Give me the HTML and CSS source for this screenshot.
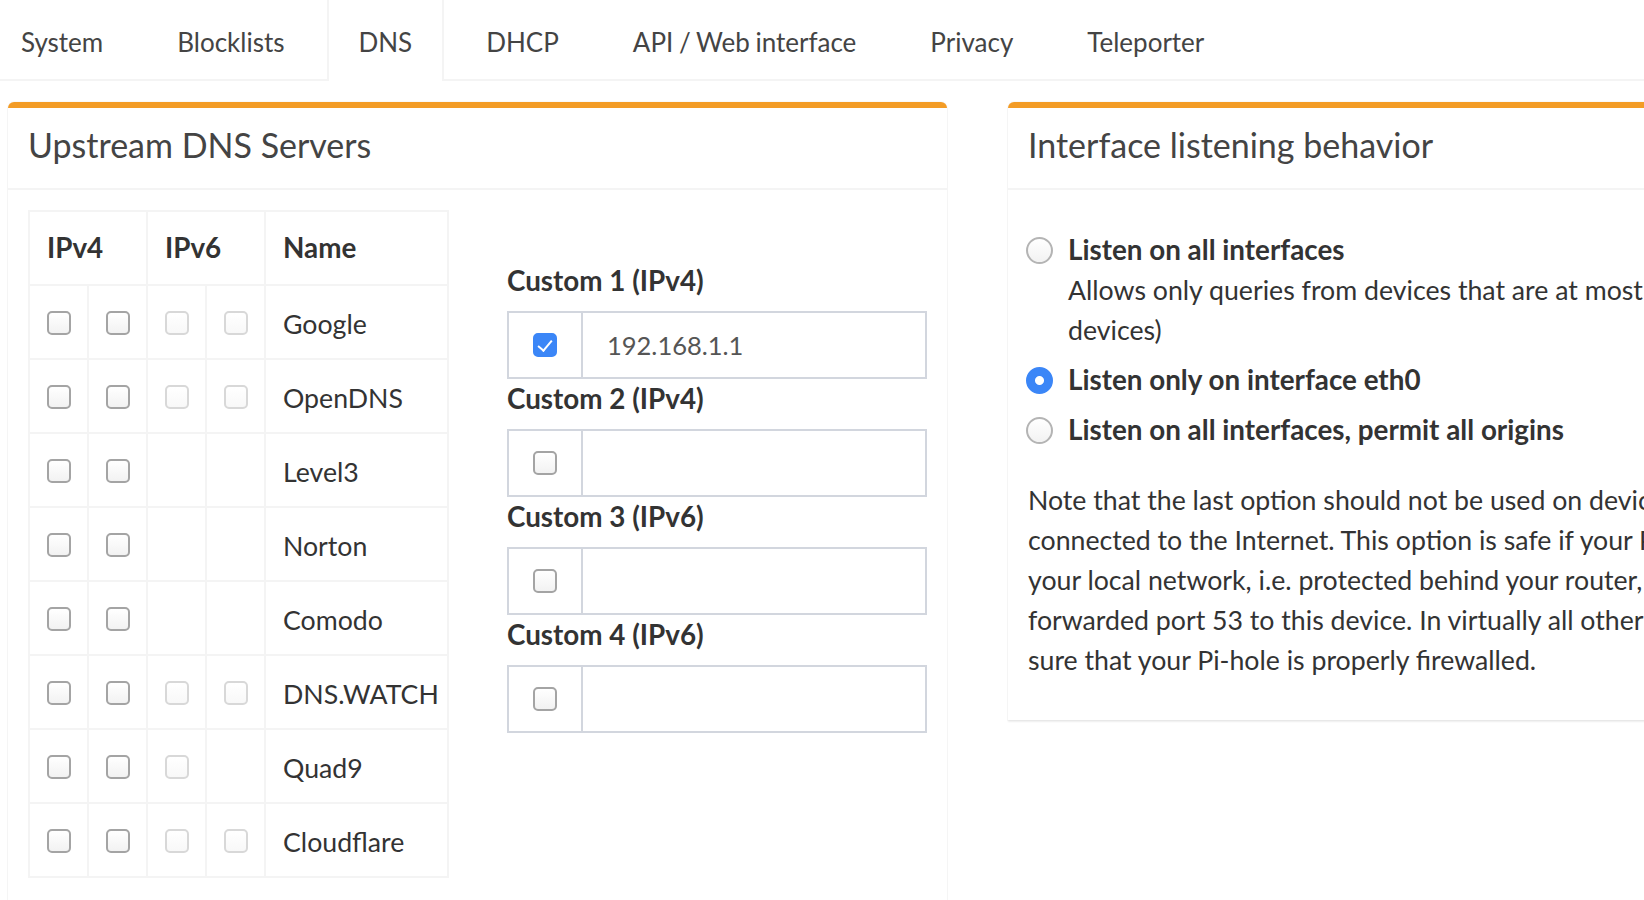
FILE: index.html
```html
<!DOCTYPE html>
<html>
<head>
  <meta name="viewport" content="width=device-width, initial-scale=1.0">
  <title>Settings - DNS</title>
  <link rel="stylesheet" href="styles.css">
</head>
<body>
  <ul class="nav-tabs">
    <li><a href="#system">System</a></li>
    <li><a href="#blocklists">Blocklists</a></li>
    <li class="active"><a href="#dns">DNS</a></li>
    <li><a href="#dhcp">DHCP</a></li>
    <li><a href="#api">API / Web interface</a></li>
    <li><a href="#privacy">Privacy</a></li>
    <li><a href="#teleporter">Teleporter</a></li>
  </ul>

  <div class="content">
    <div class="box">
      <div class="box-header">
        <h3 class="box-title">Upstream DNS Servers</h3>
      </div>
      <div class="box-body upstream">
        <table class="servers">
          <colgroup>
            <col class="col-check">
            <col class="col-check">
            <col class="col-check">
            <col class="col-check">
            <col class="col-name">
          </colgroup>
          <tr>
            <th colspan="2">IPv4</th>
            <th colspan="2">IPv6</th>
            <th>Name</th>
          </tr>
          <tr>
            <td><input type="checkbox"></td>
            <td><input type="checkbox"></td>
            <td><input type="checkbox" disabled></td>
            <td><input type="checkbox" disabled></td>
            <td>Google</td>
          </tr>
          <tr>
            <td><input type="checkbox"></td>
            <td><input type="checkbox"></td>
            <td><input type="checkbox" disabled></td>
            <td><input type="checkbox" disabled></td>
            <td>OpenDNS</td>
          </tr>
          <tr>
            <td><input type="checkbox"></td>
            <td><input type="checkbox"></td>
            <td></td>
            <td></td>
            <td>Level3</td>
          </tr>
          <tr>
            <td><input type="checkbox"></td>
            <td><input type="checkbox"></td>
            <td></td>
            <td></td>
            <td>Norton</td>
          </tr>
          <tr>
            <td><input type="checkbox"></td>
            <td><input type="checkbox"></td>
            <td></td>
            <td></td>
            <td>Comodo</td>
          </tr>
          <tr>
            <td><input type="checkbox"></td>
            <td><input type="checkbox"></td>
            <td><input type="checkbox" disabled></td>
            <td><input type="checkbox" disabled></td>
            <td>DNS.WATCH</td>
          </tr>
          <tr>
            <td><input type="checkbox"></td>
            <td><input type="checkbox"></td>
            <td><input type="checkbox" disabled></td>
            <td></td>
            <td>Quad9</td>
          </tr>
          <tr>
            <td><input type="checkbox"></td>
            <td><input type="checkbox"></td>
            <td><input type="checkbox" disabled></td>
            <td><input type="checkbox" disabled></td>
            <td>Cloudflare</td>
          </tr>
        </table>

        <div class="custom">
          <label for="custom1">Custom 1 (IPv4)</label>
          <div class="input-group">
            <span class="addon"><input type="checkbox" checked></span>
            <input id="custom1" type="text" value="192.168.1.1">
          </div>
          <label for="custom2">Custom 2 (IPv4)</label>
          <div class="input-group">
            <span class="addon"><input type="checkbox"></span>
            <input id="custom2" type="text">
          </div>
          <label for="custom3">Custom 3 (IPv6)</label>
          <div class="input-group">
            <span class="addon"><input type="checkbox"></span>
            <input id="custom3" type="text">
          </div>
          <label for="custom4">Custom 4 (IPv6)</label>
          <div class="input-group">
            <span class="addon"><input type="checkbox"></span>
            <input id="custom4" type="text">
          </div>
        </div>
      </div>
    </div>

    <div class="box">
      <div class="box-header">
        <h3 class="box-title">Interface listening behavior</h3>
      </div>
      <div class="box-body">
        <label class="radio">
          <input type="radio" name="listening">
          <span class="title">Listen on all interfaces</span>
          <span class="desc">Allows only queries from devices that are at most one hop away (local<br>devices)</span>
        </label>
        <label class="radio">
          <input type="radio" name="listening" checked>
          <span class="title">Listen only on interface eth0</span>
        </label>
        <label class="radio">
          <input type="radio" name="listening">
          <span class="title">Listen on all interfaces, permit all origins</span>
        </label>
        <p class="note">
          Note that the last option should not be used on devices which are directly<br>
          connected to the Internet. This option is safe if your Pi-hole is located within<br>
          your local network, i.e. protected behind your router, and you have not<br>
          forwarded port 53 to this device. In virtually all other cases you have to make<br>
          sure that your Pi-hole is properly firewalled.
        </p>
      </div>
    </div>
  </div>
</body>
</html>
```

FILE: styles.css
```css
html, body {
  margin: 0;
  overflow: hidden;
}

body {
  background-color: #fff;
  color: #333;
  font-family: Lato, "Open Sans", sans-serif;
  font-size: 26.7px;
  line-height: 40px;
}

/* tabs */
.nav-tabs {
  display: flex;
  list-style: none;
  margin: 0;
  padding: 0;
  border-bottom: 2px solid #f4f4f4;
  font-size: 26px;
  word-spacing: -1px;
}

.nav-tabs li {
  margin-right: 10px;
  margin-bottom: -2px;
}

.nav-tabs li:first-child {
  margin-left: -11px;
}

.nav-tabs a {
  display: block;
  padding: 22px 32px 17px;
  color: #444;
  text-decoration: none;
}

.nav-tabs li.active a {
  padding: 22px 30px 19px;
  border-left: 2px solid #f4f4f4;
  border-right: 2px solid #f4f4f4;
  background-color: #fff;
}

/* boxes */
.content {
  display: grid;
  grid-template-columns: 939px 939px;
  column-gap: 61px;
  align-items: start;
  padding: 21px 0 0 8px;
}

.box {
  background-color: #fff;
  border-top: 6px solid #f39c26;
  border-radius: 6px 6px 0 0;
  box-shadow: 0 0 0 1px rgba(0, 0, 0, 0.025), 0 2px 2px rgba(0, 0, 0, 0.07);
}

.box-header {
  padding: 17px 20px 23px;
  border-bottom: 2px solid #f4f4f4;
}

.box-title {
  margin: 0;
  color: #444;
  font-size: 34px;
  font-weight: 400;
  line-height: 40px;
}

.box-body {
  padding: 20px;
}

.upstream {
  display: grid;
  grid-template-columns: 419px 420px;
  column-gap: 60px;
  padding-bottom: 60px;
}

/* server table */
.servers {
  width: 419px;
  border-collapse: collapse;
  table-layout: fixed;
}

.col-check {
  width: 59px;
}

.col-name {
  width: 183px;
}

.servers th,
.servers td {
  padding: 16px 16px 16px 17px;
  border: 2px solid #f4f4f4;
  text-align: left;
  vertical-align: middle;
  white-space: nowrap;
}

.servers td {
  padding-top: 18px;
  padding-bottom: 14px;
}

.servers th {
  font-size: 27.8px;
  font-weight: 700;
}

input[type="checkbox"] {
  appearance: none;
  position: relative;
  display: block;
  width: 24px;
  height: 24px;
  margin: 0;
  border: 2px solid #a4a4a4;
  border-radius: 5px;
  background: linear-gradient(#fff, #f2f2f2);
  box-sizing: border-box;
}

.servers td input[type="checkbox"] {
  margin-top: -3px;
}

input[type="checkbox"]:disabled {
  border-color: #d8d8d8;
  background: linear-gradient(#fff, #f8f8f8);
}

input[type="checkbox"]:checked {
  border-color: #3b86f7;
  background: #3b86f7;
}

input[type="checkbox"]:checked::after {
  content: "";
  position: absolute;
  left: 6px;
  top: 2px;
  width: 6px;
  height: 12px;
  border-right: 2.5px solid #fff;
  border-bottom: 2.5px solid #fff;
  transform: rotate(40deg);
}

/* custom upstreams */
.custom {
  padding-top: 51px;
}

.custom label {
  display: block;
  margin-bottom: 10px;
  font-size: 27.8px;
  font-weight: 700;
}

.input-group {
  display: flex;
  height: 68px;
  border: 2px solid #d2d6de;
  box-sizing: border-box;
}

.addon {
  display: flex;
  align-items: center;
  justify-content: center;
  width: 72px;
  border-right: 2px solid #d2d6de;
}

.input-group input[type="text"] {
  flex: 1;
  min-width: 0;
  padding: 0 24px;
  border: none;
  outline: none;
  color: #555;
  font: inherit;
  font-size: 25.5px;
}

/* listening behaviour */
.radio {
  display: grid;
  grid-template-columns: 40px auto;
  margin: 20px 0;
  white-space: nowrap;
}

.radio + .radio {
  margin-top: -10px;
}

.radio input {
  appearance: none;
  align-self: center;
  width: 27px;
  height: 27px;
  margin: 0 0 0 -2px;
  border: 2px solid #b4b4b4;
  border-radius: 50%;
  background: linear-gradient(#fff, #f2f2f2);
  box-sizing: border-box;
}

.radio input:checked {
  border-color: #3b86f7;
  background: radial-gradient(circle, #fff 0 4px, #3b86f7 5px);
}

.radio .title {
  font-size: 27.8px;
  font-weight: 700;
}

.radio .desc {
  grid-column: 2;
}

.note {
  margin: 30px 0 20px;
  white-space: nowrap;
}
```
